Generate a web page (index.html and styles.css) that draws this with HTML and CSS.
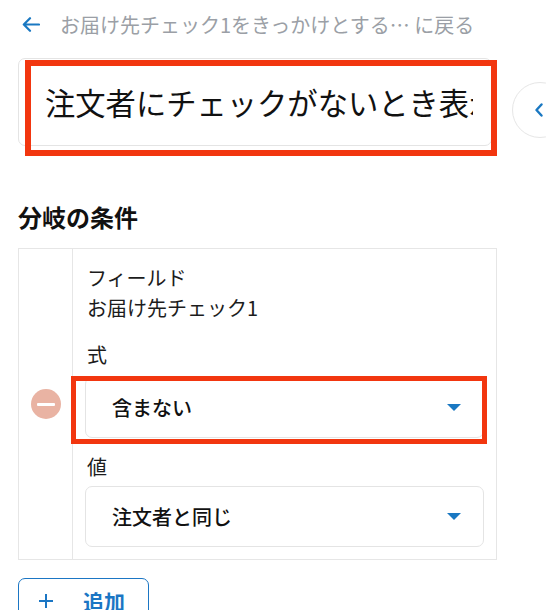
FILE: index.html
```html
<!DOCTYPE html>
<html lang="ja">
<head>
<meta charset="utf-8">
<title>分岐の条件</title>
<link rel="stylesheet" href="styles.css">
</head>
<body>
<div class="page">
  <div class="topbar">
    <svg class="back-arrow" width="18" height="15" viewBox="0 0 18 15">
      <path d="M17 7.5H2M8 1.2L1.8 7.5L8 13.8" fill="none" stroke="#1a78c2" stroke-width="2.2" stroke-linecap="round" stroke-linejoin="round"/>
    </svg>
    <span class="back-text">お届け先チェック1をきっかけとする… に戻る</span>
  </div>

  <div class="title-row">
    <div class="title-input">
      <span class="title-text">注文者にチェックがないとき表示</span>
    </div>
    <div class="side-toggle">
      <svg width="8" height="14" viewBox="0 0 8 14">
        <path d="M6.5 1.5L1.5 7L6.5 12.5" fill="none" stroke="#1a78c2" stroke-width="2.4" stroke-linecap="round" stroke-linejoin="round"/>
      </svg>
    </div>
    <div class="highlight highlight-title"></div>
  </div>

  <h2 class="section-title">分岐の条件</h2>

  <div class="card">
    <div class="card-side">
      <span class="remove-btn"><span class="remove-bar"></span></span>
    </div>
    <div class="card-body">
      <div class="label">フィールド</div>
      <div class="value">お届け先チェック1</div>

      <div class="label label-gap">式</div>
      <div class="select-wrap">
        <div class="select">
          <span class="select-text">含まない</span>
          <span class="caret"></span>
        </div>
        <div class="highlight highlight-select"></div>
      </div>

      <div class="label label-gap2">値</div>
      <div class="select select-2">
        <span class="select-text">注文者と同じ</span>
        <span class="caret"></span>
      </div>
    </div>
  </div>

  <button class="add-btn">
    <svg width="16" height="16" viewBox="0 0 16 16">
      <path d="M8 1V15M1 8H15" stroke="#1b76c4" stroke-width="2"/>
    </svg>
    <span class="add-text">追加</span>
  </button>
</div>
</body>
</html>
```

FILE: styles.css
```css
html, body {
  margin: 0;
  padding: 0;
  background: #ffffff;
}

body {
  width: 546px;
  height: 610px;
  overflow: hidden;
  font-family: "Noto Sans CJK JP", "Noto Sans", sans-serif;
  color: #222;
}

.page {
  padding-left: 18px;
}

.topbar {
  height: 49px;
  display: flex;
  align-items: center;
  padding-left: 4px;
}

.back-arrow {
  flex: 0 0 auto;
  margin-right: 20px;
}

.back-text {
  font-size: 20px;
  color: #9b9fa6;
  white-space: nowrap;
  line-height: 1;
}

.title-row {
  position: relative;
  display: flex;
  align-items: flex-start;
  margin-top: 9px;
}

.title-input {
  flex: 0 0 auto;
  width: 474px;
  min-width: 0;
  box-sizing: border-box;
  height: 88px;
  border: 1px solid #e4e4e4;
  border-radius: 7px;
  padding: 0 18px 0 26px;
  display: flex;
  align-items: center;
  overflow: hidden;
}

.title-text {
  display: block;
  flex: 1 1 auto;
  min-width: 0;
  overflow: hidden;
  font-size: 30.3px;
  color: #111;
  white-space: nowrap;
  line-height: 36px;
}

.side-toggle {
  flex: 0 0 56px;
  height: 56px;
  box-sizing: border-box;
  margin-left: 20px;
  margin-top: 24px;
  border: 1px solid #e6e6e6;
  border-radius: 50%;
  background: #fff;
  display: flex;
  align-items: center;
  padding-left: 22px;
}

.highlight {
  position: absolute;
  box-sizing: border-box;
  border: 6px solid #f2360f;
  pointer-events: none;
}

.highlight-title {
  left: 7px;
  top: 2px;
  width: 472px;
  height: 96px;
}

.section-title {
  margin: 56px 0 0 0;
  font-size: 24px;
  font-weight: 700;
  line-height: 30px;
  color: #111;
}

.card {
  margin-top: 16px;
  width: 479px;
  box-sizing: border-box;
  border: 1px solid #e6e6e6;
  display: grid;
  grid-template-columns: 54px 1fr;
}

.card-side {
  border-right: 1px solid #e6e6e6;
  display: flex;
  justify-content: center;
  align-items: flex-start;
}

.remove-btn {
  margin-top: 140px;
  width: 30px;
  height: 30px;
  border-radius: 50%;
  background: #e9b3a3;
  display: flex;
  align-items: center;
  justify-content: center;
}

.remove-bar {
  width: 18px;
  height: 3px;
  background: #fff;
  border-radius: 1px;
}

.card-body {
  padding: 14px 12px 12px 12px;
  display: flex;
  flex-direction: column;
}

.label,
.value {
  font-size: 20px;
  line-height: 30px;
  color: #1c1c1c;
  padding-left: 2px;
}

.label-gap {
  margin-top: 17px;
}

.label-gap2 {
  margin-top: 14px;
}

.select-wrap {
  position: relative;
  margin-top: 7px;
}

.select {
  box-sizing: border-box;
  height: 61px;
  border: 1px solid #e4e4e4;
  border-radius: 7px;
  display: flex;
  align-items: center;
  justify-content: space-between;
  padding: 0 22px 0 26px;
}

.select-2 {
  margin-top: 4px;
}

.select-text {
  font-size: 20px;
  font-weight: 500;
  color: #111;
}

.caret {
  width: 0;
  height: 0;
  border-left: 7.5px solid transparent;
  border-right: 7.5px solid transparent;
  border-top: 7px solid #1a78c2;
}

.highlight-select {
  left: -14px;
  top: -1px;
  width: 416px;
  height: 68px;
  border-width: 5px;
}

.add-btn {
  margin-top: 18px;
  width: 131px;
  height: 46px;
  box-sizing: border-box;
  border: 1px solid #1b76c4;
  border-radius: 7px;
  background: #fff;
  display: flex;
  align-items: center;
  padding: 0 0 0 19px;
  font-family: inherit;
  cursor: pointer;
}

.add-btn svg {
  flex: 0 0 auto;
}

.add-text {
  margin-left: 29px;
  font-size: 21px;
  font-weight: 700;
  color: #1b76c4;
}
```
